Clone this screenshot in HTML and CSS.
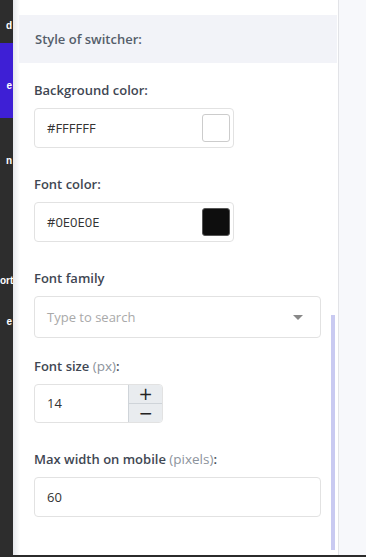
FILE: index.html
```html
<!doctype html>
<html lang="en">
 <head>
  <meta charset="UTF-8">
  <link rel="stylesheet" href="styles.css">
  <title>Switcher settings</title>
 </head>
 <body>
  <div class="page">
    <!-- left menu, only its edge is visible -->
    <nav class="side">
      <div class="si si1">d</div>
      <div class="si si2 on">e</div>
      <div class="si si3">n</div>
      <div class="si si4">ort</div>
      <div class="si si5">e</div>
    </nav>

    <main class="panel">
      <div class="sec-head">Style of switcher:</div>

      <div class="fld">
        <label class="lbl">Background color:</label>
        <div class="inp clr">
          <span>#FFFFFF</span>
          <i class="sw sw-w"></i>
        </div>
      </div>

      <div class="fld">
        <label class="lbl">Font color:</label>
        <div class="inp clr">
          <span>#0E0E0E</span>
          <i class="sw sw-b"></i>
        </div>
      </div>

      <div class="fld fld-sel">
        <label class="lbl">Font family</label>
        <div class="inp sel">
          <span class="ph">Type to search</span>
          <i class="caret"></i>
        </div>
      </div>

      <div class="fld">
        <label class="lbl">Font size <em>(px)</em>:</label>
        <div class="num">
          <span class="num-val">14</span>
          <div class="num-btns">
            <b>+</b>
            <b>&minus;</b>
          </div>
        </div>
      </div>

      <div class="fld">
        <label class="lbl">Max width on mobile <em>(pixels)</em>:</label>
        <div class="inp wide"><span>60</span></div>
      </div>

      <div class="scroll-thumb"></div>
    </main>

    <aside class="rside"></aside>
  </div>
 </body>
</html>
```

FILE: styles.css
```css
html,body{margin:0;padding:0;}
body{
    width:366px;height:557px;overflow:hidden;
    font-family:"Open Sans","Noto Sans",sans-serif;
    background:#fff;
}
.page{display:flex;height:555px;border-bottom:2px solid #2b2b2b;}

/* left menu edge */
.side{width:13px;flex:none;background:#2d2d2d;overflow:hidden;}
.si{
    color:#fff;font:bold 10px/12px "Liberation Sans",sans-serif;
    text-align:right;white-space:nowrap;padding-right:1px;
    box-sizing:border-box;
}
.si1{height:43px;padding-top:20px;}
.si2{height:75px;padding-top:37px;}
.si3{height:80px;padding-top:37px;}
.si4{height:100px;padding-top:77px;}
.si5{padding-top:18px;}
.on{background:#3e1fd5;}

/* main panel */
.panel{
    position:relative;
    width:325px;flex:none;
    background:linear-gradient(to right,#e6e8ec 0,#fff 7px) no-repeat;
    padding-top:15px;
    box-sizing:border-box;
}
.sec-head{
    margin:0 1px 0 6px;
    height:48px;
    background:#f2f3f8;
    padding-left:16px;
    font-size:13px;font-weight:600;line-height:48px;
    color:#555e6b;
}
.fld{padding-left:21px;margin-top:18px;}
.fld + .fld{margin-top:27px;}
.fld-sel + .fld{margin-top:19px;}
.lbl{
    display:block;
    font-size:13px;font-weight:600;line-height:18px;
    color:#3f4753;
    margin-bottom:9px;
}
.lbl em{font-style:normal;font-weight:400;color:#8c939c;font-size:13.5px;}

.inp{
    display:flex;align-items:center;
    height:40px;box-sizing:border-box;
    border:1px solid #e2e2e2;border-radius:4px;
    padding:0 3px 0 12px;
    font-size:13px;color:#333;
}
.inp span{flex:1;}
.clr{width:200px;}
.sw{
    width:28px;height:28px;box-sizing:border-box;
    border:1px solid #ccc;border-radius:3px;
}
.sw-w{background:#fff;}
.sw-b{background:#0e0e0e;border-color:#555;}
.sel{width:287px;height:42px;padding-right:17px;}
.ph{color:#a9a9a9;}
.caret{
    width:0;height:0;
    border-left:5px solid transparent;border-right:5px solid transparent;
    border-top:5px solid #888;
}
.wide{width:287px;}

.num{
    display:flex;width:129px;height:39px;box-sizing:border-box;
    border:1px solid #e2e2e2;border-radius:4px;overflow:hidden;
}
.num-val{flex:1;padding-left:12px;line-height:37px;font-size:13px;color:#333;}
.num-btns{
    width:33px;display:flex;flex-direction:column;
    border-left:1px solid #cfd4d9;background:#e9ecef;
}
.num-btns b{
    flex:1;display:flex;align-items:center;justify-content:center;
    font:normal 17px/1 "DejaVu Sans",sans-serif;color:#222;
}
.num-btns b + b{border-top:1px solid #cfd4d9;}

.scroll-thumb{
    position:absolute;left:318px;top:315px;
    width:4px;height:235px;background:#c9caf1;
}

/* right strip */
.rside{flex:1;background:#f7f8fb;border-left:1px solid #e2e3e7;}
```
